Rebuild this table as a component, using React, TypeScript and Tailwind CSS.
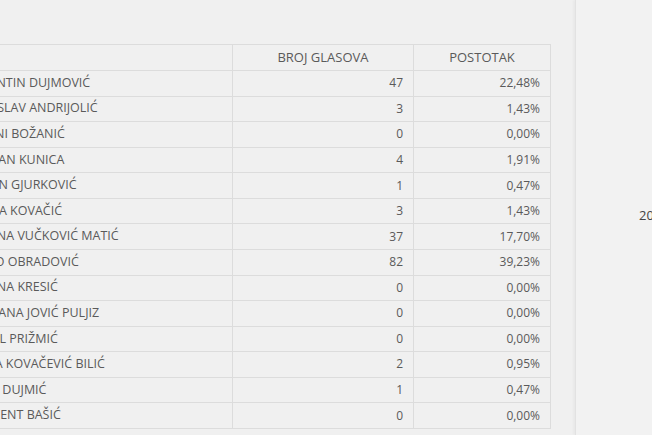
import React from "react";

type Row = { name: string; votes: number; pct: string };

const rows: Row[] = [
  { name: "KONSTANTIN DUJMOVIĆ", votes: 47, pct: "22,48%" },
  { name: "RADOMISLAV ANDRIJOLIĆ", votes: 3, pct: "1,43%" },
  { name: "GIOVANNI BOŽANIĆ", votes: 0, pct: "0,00%" },
  { name: "SEBASTIJAN KUNICA", votes: 4, pct: "1,91%" },
  { name: "BENJAMIN GJURKOVIĆ", votes: 1, pct: "0,47%" },
  { name: "KATARINA KOVAČIĆ", votes: 3, pct: "1,43%" },
  { name: "ANDRIJANA VUČKOVIĆ MATIĆ", votes: 37, pct: "17,70%" },
  { name: "ANTONIO OBRADOVIĆ", votes: 82, pct: "39,23%" },
  { name: "ANDRIJANA KRESIĆ", votes: 0, pct: "0,00%" },
  { name: "SEBASTIJANA JOVIĆ PULJIZ", votes: 0, pct: "0,00%" },
  { name: "EMANUEL PRIŽMIĆ", votes: 0, pct: "0,00%" },
  { name: "MARTINA KOVAČEVIĆ BILIĆ", votes: 2, pct: "0,95%" },
  { name: "DRAGAN DUJMIĆ", votes: 1, pct: "0,47%" },
  { name: "IVO VINCENT BAŠIĆ", votes: 0, pct: "0,00%" },
];

const cell = "flex items-center border-r border-[#dcdcdc]";

export default function App() {
  return (
    <div className="flex w-[652px] h-[435px] overflow-hidden bg-[#f0f0f0] font-['Open_Sans',sans-serif] text-[12px] text-[#5a5a5a]">
      {/* results table, scrolled so the name column starts off-screen */}
      <div className="ml-[-70px] mt-[44px] w-[621px] shrink-0 self-start border-l border-t border-[#dcdcdc]">
        <div className="grid h-[26px] grid-cols-[302px_181px_137px] border-b border-[#dcdcdc] text-[13px]">
          <div className={cell}></div>
          <div className={`${cell} justify-center`}>BROJ GLASOVA</div>
          <div className={`${cell} justify-center`}>POSTOTAK</div>
        </div>
        {rows.map((r, i) => (
          <div
            key={i}
            className="grid h-[25.57px] grid-cols-[302px_181px_137px] border-b border-[#dcdcdc]"
          >
            <div className={`${cell} pl-[17px] whitespace-nowrap text-[12.5px]`}>{r.name}</div>
            <div className={`${cell} justify-end pr-[10px]`}>{r.votes}</div>
            <div className={`${cell} justify-end pr-[10px]`}>{r.pct}</div>
          </div>
        ))}
      </div>

      {/* side panel */}
      <div className="ml-[24px] flex-1 border-l border-[#e2e2e2] bg-[#f2f2f2] shadow-[-2px_0_2px_rgba(0,0,0,0.03)]">
        <div className="mt-[206px] pl-[63px] text-[13px] text-[#444] whitespace-nowrap">2018.</div>
      </div>
    </div>
  );
}
